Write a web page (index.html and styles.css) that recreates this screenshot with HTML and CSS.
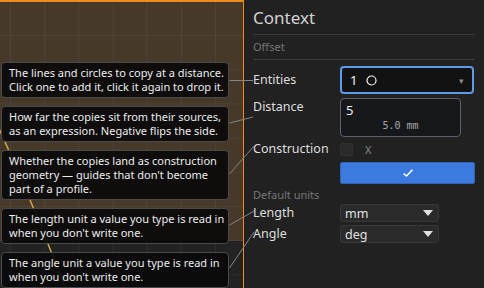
FILE: index.html
```html
<!DOCTYPE html>
<html lang="en">

<head>
    <meta charset="UTF-8">
    <title>Offset</title>
    <link rel="stylesheet" href="styles.css">
</head>

<body>
    <div class="app">
        <div class="viewport">
            <svg class="sketch" width="243" height="286" viewBox="0 2 243 286">
                <path d="M-4 122 Q 30 196 70 300" fill="none" stroke="#d9aa4a" stroke-width="1.4" />
            </svg>
            <div class="tips">
                <div class="tip">The lines and circles to copy at a distance.<br>Click one to add it, click it again to drop it.</div>
                <div class="tip">How far the copies sit from their sources,<br>as an expression. Negative flips the side.</div>
                <div class="tip">Whether the copies land as construction<br>geometry — guides that don't become<br>part of a profile.</div>
                <div class="tip">The length unit a value you type is read in<br>when you don't write one.</div>
                <div class="tip">The angle unit a value you type is read in<br>when you don't write one.</div>
            </div>
        </div>

        <aside class="panel">
            <h1 class="title">Context</h1>
            <div class="section">Offset</div>

            <div class="row row-entities">
                <label class="lbl">Entities</label>
                <div class="select select-focus">
                    <span class="sel-text">1
                        <svg class="circle" width="11" height="11" viewBox="0 0 11 11">
                            <circle cx="5.5" cy="5.5" r="4.5" fill="none" stroke="#f2f2f2" stroke-width="1.2" />
                        </svg>
                    </span>
                    <span class="caret-small">▾</span>
                </div>
            </div>

            <div class="row row-distance">
                <label class="lbl">Distance</label>
                <div class="expr">
                    <div class="expr-value">5</div>
                    <div class="expr-result">5.0 mm</div>
                </div>
            </div>

            <div class="row row-construction">
                <label class="lbl">Construction</label>
                <span class="check"></span>
                <span class="check-text">X</span>
            </div>

            <div class="row row-apply">
                <button class="apply">
                    <svg width="12" height="10" viewBox="0 0 12 10">
                        <polyline points="1.5,5.5 4.5,8 10.5,1.8" fill="none" stroke="#fff" stroke-width="1.6" />
                    </svg>
                </button>
            </div>

            <div class="section-plain">Default units</div>

            <div class="row row-unit">
                <label class="lbl">Length</label>
                <div class="unit">mm<span class="caret"></span></div>
            </div>
            <div class="row row-unit row-angle">
                <label class="lbl">Angle</label>
                <div class="unit">deg<span class="caret"></span></div>
            </div>
        </aside>

        <svg class="leaders" width="484" height="288">
            <line x1="229.5" y1="80.5" x2="253" y2="80.5" />
            <line x1="229.5" y1="123" x2="253" y2="117" />
            <line x1="229.5" y1="174" x2="254" y2="146" />
            <line x1="229.5" y1="225" x2="254" y2="211" />
            <line x1="229.5" y1="268" x2="254" y2="232" />
        </svg>
    </div>
</body>

</html>
```

FILE: styles.css
```css
html,
body {
    margin: 0;
    height: 100%;
    background-color: #222222;
}

body {
    font-family: 'Noto Sans', 'Open Sans', sans-serif;
    color: #dedede;
    overflow: hidden;
}

.app {
    position: relative;
    display: flex;
    width: 484px;
    height: 288px;
}

/* sketch viewport */
.viewport {
    position: relative;
    width: 243px;
    height: 286px;
    border-top: 2px solid #f28a1c;
    border-right: 1px solid #f28a1c;
    background-color: #46392a;
    background-image:
        linear-gradient(to right, rgba(255, 255, 255, 0.05) 1px, transparent 1px),
        linear-gradient(to bottom, rgba(255, 255, 255, 0.05) 1px, transparent 1px),
        linear-gradient(to bottom, #46392a 0 239px, #222222 239px);
    background-size: 34.2px 34.2px, 34.2px 34.2px, 100% 100%;
    background-position: 10px 0, 0 33px, 0 0;
}

.sketch {
    position: absolute;
    top: 0;
    left: 0;
}

.tips {
    position: relative;
    display: flex;
    flex-direction: column;
    gap: 8px;
    padding-top: 60px;
    padding-left: 1px;
}

.tip {
    width: 212px;
    padding: 3px 7px 3px 7px;
    border: 1px solid #4a4a4a;
    border-radius: 4px;
    background-color: rgba(10, 10, 10, 0.93);
    color: #ececec;
    font-size: 11px;
    line-height: 14px;
    white-space: nowrap;
}

/* context panel */
.panel {
    flex: 1;
    padding: 0 9px 0 9px;
    background-color: #212121;
}

.title {
    margin: 0;
    padding-top: 5px;
    height: 29px;
    line-height: 26px;
    font-size: 17px;
    font-weight: 400;
    color: #d2d2d2;
    border-bottom: 1px solid #3a3a3a;
}

.section {
    height: 24px;
    line-height: 24px;
    font-size: 11px;
    color: #777777;
    border-bottom: 1px solid #3a3a3a;
}

.section-plain {
    margin-top: 4px;
    height: 14px;
    line-height: 14px;
    font-size: 11px;
    color: #777777;
}

.row {
    display: flex;
    align-items: center;
}

.lbl {
    width: 87px;
    flex-shrink: 0;
    font-size: 12.5px;
    line-height: 16px;
    color: #dedede;
}

.row-entities {
    margin-top: 6px;
    height: 28px;
}

.select {
    box-sizing: border-box;
    display: flex;
    align-items: center;
    justify-content: space-between;
    width: 134px;
    height: 28px;
    padding: 0 8px 0 8px;
    border-radius: 4px;
    background-color: #121212;
}

.select-focus {
    border: 2px solid #5b9be8;
}

.sel-text {
    display: flex;
    align-items: center;
    gap: 9px;
    font-size: 13px;
    color: #f2f2f2;
}

.caret-small {
    font-size: 9px;
    color: #8a8a8a;
}

.row-distance {
    margin-top: 4px;
    align-items: flex-start;
}

.row-distance .lbl {
    margin-top: 1px;
}

.expr {
    box-sizing: border-box;
    width: 121px;
    height: 39px;
    padding: 3px 5px 0 5px;
    border: 1px solid #5e6168;
    border-radius: 4px;
    background-color: #16171b;
}

.expr-value {
    font-size: 13px;
    line-height: 16px;
    color: #f0f0f0;
}

.expr-result {
    text-align: center;
    font-family: 'DejaVu Sans Mono', monospace;
    font-size: 10px;
    line-height: 15px;
    color: #a8a8a8;
}

.row-construction {
    margin-top: 6px;
    height: 12px;
}

.check {
    box-sizing: border-box;
    width: 13px;
    height: 13px;
    border: 1px solid #303030;
    border-radius: 2px;
    background-color: #2a2a2a;
}

.check-text {
    margin-left: 12px;
    font-size: 11px;
    color: #8a8a8a;
}

.row-apply {
    margin-top: 7px;
    padding-left: 87px;
}

.apply {
    display: flex;
    align-items: center;
    justify-content: center;
    width: 135px;
    height: 22px;
    padding: 0;
    border: 1px solid #2f63b4;
    border-radius: 2px;
    background-color: #3b7ade;
}

.row-unit {
    margin-top: 2px;
    height: 18px;
}

.row-angle {
    margin-top: 3px;
}

.unit {
    box-sizing: border-box;
    display: flex;
    align-items: center;
    justify-content: space-between;
    width: 99px;
    height: 18px;
    padding: 0 5px 0 4px;
    border: 1px solid #383838;
    border-radius: 3px;
    background-color: #2a2a2a;
    font-size: 12.5px;
    color: #e0e0e0;
}

.caret {
    width: 0;
    height: 0;
    border-left: 5px solid transparent;
    border-right: 5px solid transparent;
    border-top: 6px solid #e0e0e0;
}

/* tooltip leader lines, drawn over both sides */
.leaders {
    position: absolute;
    top: 0;
    left: 0;
    pointer-events: none;
}

.leaders line {
    stroke: #858585;
    stroke-width: 1;
}
```
